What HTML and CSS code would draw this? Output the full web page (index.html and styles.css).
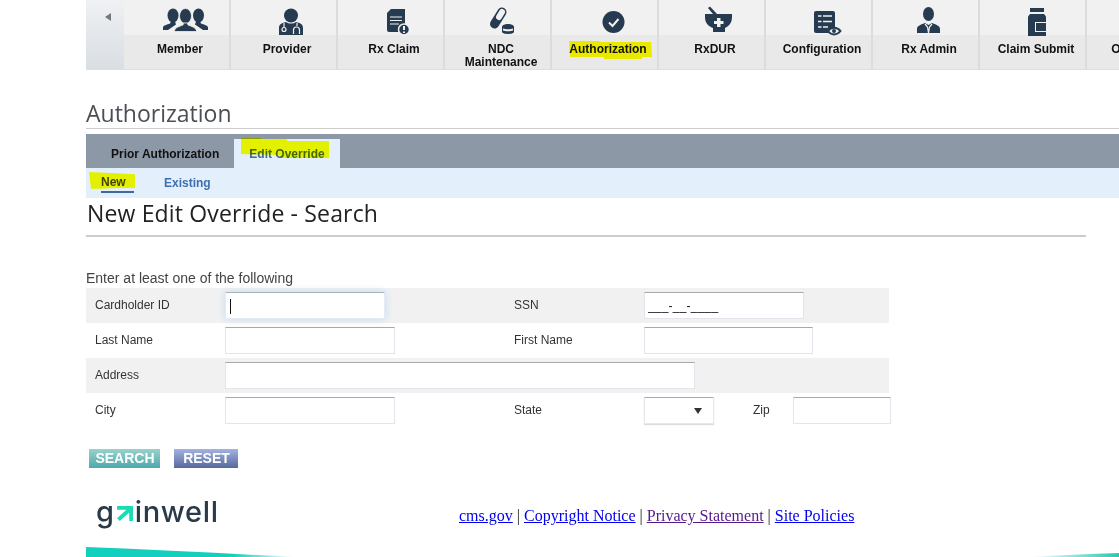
FILE: index.html
```html
<!DOCTYPE html>
<html lang="en">
<head>
<meta charset="utf-8">
<title>Authorization</title>
<link rel="stylesheet" href="styles.css">
</head>
<body>
<div class="page">
  <nav class="nav">
    <div class="nav-back"><span class="tri"></span></div>
    <a class="nav-item"><span class="nav-icon"><svg viewBox="0 0 60 36" width="60" height="36"><g class="ic"><ellipse cx="23" cy="15.500" rx="5.500" ry="7"/><path d="M13 30v-2.500c0-2 4-3 7-4l1-2h4l1 3-8 5.500z"/><ellipse cx="48.500" cy="15.500" rx="5.500" ry="7"/><path d="M58 30v-2.500c0-2-4-3-7-4l-1-2h-4l-1 3 8 5.500z"/><ellipse class="ring2" cx="35.500" cy="16" rx="6" ry="7.500"/><path class="ring2" d="M24 31.500c1-4 5-5 9-6.500l.5-2h4l.5 2c4 1.500 8 2.500 9 6.500z"/></g></svg></span><span class="nav-label">Member</span></a>
    <a class="nav-item"><span class="nav-icon"><svg viewBox="0 0 60 36" width="60" height="36"><g class="ic"><circle cx="34" cy="15.500" r="7"/><path d="M22 35v-7c0-4 3-5 7-6 3 2 7 2 10 0 4 1 7 2 7 6v7z"/></g><circle class="ln" cx="27" cy="29.500" r="2"/><path class="ln" d="M27 23v4.500M40 23v3M36.500 34v-4a3 3 0 0 1 6 0v4"/></svg></span><span class="nav-label">Provider</span></a>
    <a class="nav-item"><span class="nav-icon"><svg viewBox="0 0 60 36" width="60" height="36"><path class="ic" d="M27 9h14v23H25a2 2 0 0 1-2-2V13z"/><path class="ln" d="M26 17h12M26 20.500h12M26 24h9"/><circle class="ic ring" cx="40" cy="29.500" r="5.500"/><path class="ln wide" d="M40 26v4M40 31.500v1.500"/></svg></span><span class="nav-label">Rx Claim</span></a>
    <a class="nav-item"><span class="nav-icon"><svg viewBox="0 0 60 36" width="60" height="36"><path class="cap" d="M23.500 24L31 12"/><path class="cap-in" d="M28 17L31 12"/><path class="ic" d="M31 27c0-2 3-3 6-3s6 1 6 3v5c0 1-3 2-6 2s-6-1-6-2z"/><path class="cut" d="M32 28.500c2 1 8 1 10 0v2c-2 1-8 1-10 0z"/></svg></span><span class="nav-label">NDC<br>Maintenance</span></a>
    <a class="nav-item"><span class="nav-icon"><svg viewBox="0 0 60 36" width="60" height="36"><circle class="ic" cx="35.500" cy="22" r="11"/><path class="ln wide" d="M31 22.500l3.500 3.500 6-7"/></svg></span><span class="nav-label"><span class="hl-wrap">Authorization<svg class="hl hl-auth" viewBox="0 0 84 18" preserveAspectRatio="none"><path d="M1 1h30l2 1h50l1 14-10 0v2H36v-2H2z"/></svg></span></span></a>
    <a class="nav-item"><span class="nav-icon"><svg viewBox="0 0 60 36" width="60" height="36"><path class="ic" d="M20 14h27v3c0 6-3 9-7 11v4H28v-4c-5-2-8-5-8-11z"/><path class="ic" d="M23 8l2-1.500 7 7.500h-4z"/><path class="cut" d="M32 18h3.500v3h3v3h-3v3H32v-3h-3v-3h3z"/></svg></span><span class="nav-label">RxDUR</span></a>
    <a class="nav-item"><span class="nav-icon"><svg viewBox="0 0 60 36" width="60" height="36"><path class="ic" d="M24 11h17a2 2 0 0 1 2 2v20H24a2 2 0 0 1-2-2V13a2 2 0 0 1 2-2z"/><path class="ln bar" d="M26 16h3.500M31 16h9M26 21.500h3.500M31 21.500h9M26 27h3.500M31 27h5"/><path class="eye" d="M36 31c3-4.500 9-4.500 12.500 0-3.500 4.500-9.500 4.500-12.500 0z"/><circle class="ic" cx="42" cy="31" r="2"/></svg></span><span class="nav-label">Configuration</span></a>
    <a class="nav-item"><span class="nav-icon"><svg viewBox="0 0 60 36" width="60" height="36"><g class="ic"><ellipse cx="29.500" cy="14" rx="5.500" ry="7"/><path d="M18 33v-4c0-3 3-4 8-6l3.500 2 3.500-2c5 2 8 3 8 6v4z"/></g><path class="ln" d="M26 24l2.500 3 1 6M33 24l-2.500 3-1 6"/></svg></span><span class="nav-label">Rx Admin</span></a>
    <a class="nav-item"><span class="nav-icon"><svg viewBox="0 0 60 36" width="60" height="36"><path class="ic" d="M24 8h14v4H24z"/><path class="ic" d="M24 14h14l2 2.500V36H22V16.500z"/><path class="cut2" d="M29 22h11v10H29zM30 23v8h10v-8z" fill-rule="evenodd"/></svg></span><span class="nav-label">Claim Submit</span></a>
    <a class="nav-item"><span class="nav-icon"></span><span class="nav-label">Operations</span></a>
  </nav>

  <main class="content">
    <h1 class="page-title">Authorization</h1>
    <div class="tabs">
      <a class="tab">Prior Authorization</a>
      <a class="tab tab-active"><span class="hl-wrap">Edit Override<svg class="hl hl-edit" viewBox="0 0 88 20" preserveAspectRatio="none"><path d="M0 0h20v1h25l2 2h41v17H40l-1-3-39-1z"/></svg></span></a>
    </div>
    <div class="subtabs">
      <a class="subtab subtab-active"><span class="hl-wrap">New<svg class="hl hl-new" viewBox="0 0 46 16" preserveAspectRatio="none"><path d="M0 0l23 1 23 1v13H30l-28 1z"/></svg></span></a>
      <a class="subtab">Existing</a>
    </div>
    <h2 class="section-title">New Edit Override - Search</h2>
    <p class="hint">Enter at least one of the following</p>

    <form class="form">
      <div class="row row-alt">
        <label class="lbl">Cardholder ID</label>
        <span class="cell"><input class="inp inp-focus" type="text"><span class="caret"></span></span>
        <label class="lbl">SSN</label>
        <span class="cell"><input class="inp inp-short" type="text" value="___-__-____"></span>
      </div>
      <div class="row">
        <label class="lbl">Last Name</label>
        <span class="cell"><input class="inp" type="text"></span>
        <label class="lbl">First Name</label>
        <span class="cell"><input class="inp inp-first" type="text"></span>
      </div>
      <div class="row row-alt">
        <label class="lbl">Address</label>
        <span class="cell cell-wide"><input class="inp inp-wide" type="text"></span>
      </div>
      <div class="row">
        <label class="lbl">City</label>
        <span class="cell"><input class="inp" type="text"></span>
        <label class="lbl">State</label>
        <span class="cell cell-state">
          <span class="select-wrap"><select class="sel"><option></option></select></span>
          <label class="lbl-zip">Zip</label>
          <input class="inp inp-zip" type="text">
        </span>
      </div>
    </form>

    <div class="actions">
      <button class="btn btn-search" type="button">SEARCH</button>
      <button class="btn btn-reset" type="button">RESET</button>
    </div>

    <footer class="footer">
      <div class="logo"><span>g</span><svg class="logo-arrow" viewBox="0 0 17 16" width="16" height="15"><path d="M0 0h17v16h-4V7L3 16 0 13l10-9H0z"/></svg><span>inwell</span></div>
      <div class="links">
        <a class="link" href="#">cms.gov</a> | <a class="link" href="#">Copyright Notice</a> | <a class="link link-visited" href="#">Privacy Statement</a> | <a class="link" href="#">Site Policies</a>
      </div>
    </footer>
  </main>

  <div class="swoosh">
    <svg width="210" height="10" viewBox="0 0 210 10"><defs><linearGradient id="sl" x1="0" x2="1"><stop offset="0" stop-color="#13cfbd"/><stop offset=".7" stop-color="#13cfbd"/><stop offset="1" stop-color="#13cfbd" stop-opacity="0"/></linearGradient></defs><path fill="url(#sl)" d="M0 0c60 2 130 6 210 10H0z"/></svg>
    <svg width="90" height="4" viewBox="0 0 90 4"><defs><linearGradient id="sr" x1="0" x2="1"><stop offset="0" stop-color="#13cfbd" stop-opacity="0"/><stop offset="1" stop-color="#2bc5b4"/></linearGradient></defs><path fill="url(#sr)" d="M0 4c30-2 60-3 90-4v4z"/></svg>
  </div>
</div>
</body>
</html>
```
FILE: styles.css
```css
* { box-sizing: border-box; }
html, body { margin: 0; padding: 0; height: 557px; overflow: hidden; background: #fff; }
body { font-family: "Liberation Sans", Arial, sans-serif; font-size: 12px; color: #333; }
.page { width: 1119px; height: 557px; padding-left: 86px; display: flex; flex-direction: column; overflow: hidden; }

/* top nav */
.nav { display: flex; height: 70px; flex: none; border-bottom: 1px solid #dedede; width: 1033px; overflow: hidden; }
.nav-back { flex: none; width: 38px; height: 69px; background: linear-gradient(#eff1f3, #d9dee3); display: flex; justify-content: center; padding-top: 13px; }
.tri { width: 0; height: 0; border-style: solid; border-color: transparent #777 transparent transparent; border-width: 4px 6px 4px 0; margin-left: 6px; }
.nav-item { flex: none; width: 107px; height: 69px; border-right: 2px solid #dcdcdc; padding-left: 7px; display: flex; flex-direction: column; background: #e9e9e9; text-align: center; }
.nav-icon { height: 35px; margin-left: -7px; padding-left: 7px; background: #f1f1f1; display: flex; justify-content: center; }
.nav-label { font-weight: bold; font-size: 12px; line-height: 13px; color: #111; padding-top: 8px; }
.ic { fill: #263b50; }
.ring { stroke: #f1f1f1; stroke-width: 1.5; }
.ring2 { stroke: #f1f1f1; stroke-width: .8; }
.ln { stroke: #f1f1f1; stroke-width: 1.2; fill: none; }
.bar { stroke-width: 1.6; }
.wide { stroke-width: 2; }
.cut { fill: #f1f1f1; }
.cut2 { fill: #f1f1f1; }
.cap { stroke: #263b50; stroke-width: 9; stroke-linecap: round; fill: none; }
.cap-in { stroke: #f1f1f1; stroke-width: 6; stroke-linecap: round; fill: none; }
.eye { fill: #f1f1f1; stroke: #263b50; stroke-width: 2; }

/* highlighter */
.hl-wrap { position: relative; display: inline-block; }
.hl { position: absolute; fill: #e9f500; mix-blend-mode: darken; pointer-events: none; }
.hl-auth { left: -1px; top: -3px; width: 84px; height: 19px; }
.hl-edit { left: -8px; top: -9px; width: 88px; height: 20px; }
.hl-new { left: -12px; top: -3px; width: 46px; height: 17px; }

/* headings */
.content { flex: 1; min-height: 0; }
.page-title { margin: 0; height: 59px; padding-top: 27px; font: 400 23px/32px "Open Sans", sans-serif; color: #4a4f55; border-bottom: 1px solid #ccc; }
.tabs { margin-top: 5px; height: 34px; background: #8c98a6; display: flex; padding-left: 25px; align-items: flex-end; }
.tab { height: 29px; padding-top: 8px; font-weight: bold; font-size: 12px; line-height: 14px; color: #111; }
.tab:first-child { width: 123px; }
.tab-active { width: 106px; background: #e3f0fb; color: #44689a; text-align: center; }
.subtabs { height: 30px; background: #e3f0fb; display: flex; padding-left: 15px; gap: 30px; }
.subtab { font-weight: bold; font-size: 12px; line-height: 14px; color: #3f6fb0; padding-top: 8px; height: 24px; }
.subtab-active { color: #445; border-bottom: 2px solid #3d6aa5; width: 33px; padding-top: 7px; height: 25px; }
.section-title { margin: 0; height: 39px; padding-left: 1px; font: 400 23px/30px "Open Sans", sans-serif; color: #222; border-bottom: 2px solid #ccc; width: 1000px; letter-spacing: .16px; }
.hint { margin: 0; padding-top: 32px; font-size: 14px; line-height: 18px; height: 51px; color: #444; }

/* form */
.form { width: 803px; }
.row { display: grid; grid-template-columns: 139px 280px 139px 1fr; height: 35px; align-items: center; }
.row-alt { background: #f1f1f1; }
.lbl { padding: 0 0 2px 9px; font-size: 12px; color: #333; }
.cell { position: relative; display: flex; align-items: center; }
.cell-wide { grid-column: 2 / span 3; }
.inp { display: block; height: 27px; width: 170px; padding: 0 3px; background: #fff; border: 1px solid #e2e5ec; border-top: 1px solid #a8a8a8; font: 12px "Liberation Sans", sans-serif; color: #111; outline: none; border-radius: 0; }
.inp-focus { width: 160px; box-shadow: 0 0 8px #c2daef; border-color: #e4edf5; border-top-color: #a9b4bc; }
.inp-short { width: 160px; letter-spacing: .2px; }
.inp-first { width: 169px; }
.inp-wide { width: 470px; }
.caret { position: absolute; left: 5px; top: 7px; width: 1px; height: 15px; background: #111; }
.cell-state { width: 300px; overflow: visible; }
.select-wrap { position: relative; display: block; width: 70px; height: 27px; }
.select-wrap::after { content: ""; position: absolute; left: 50px; top: 11px; border-style: solid; border-color: #333 transparent transparent; border-width: 6px 4px 0; }
.sel { appearance: none; display: block; width: 70px; height: 27px; background: #fff; border: 1px solid #e6e8ee; border-top: 1px solid #a8a8a8; box-shadow: 0 1px 1px #ddd; border-radius: 0; }
.lbl-zip { margin-left: 39px; padding-bottom: 2px; width: 40px; font-size: 12px; color: #333; }
.inp-zip { width: 98px; flex: none; }

/* actions */
.actions { display: flex; gap: 14px; padding: 21px 0 0 3px; height: 41px; }
.btn { height: 19px; border: 0; padding: 0 0 0 1px; font: bold 14px/19px "Liberation Sans", sans-serif; color: #fff; border-radius: 0; }
.btn-search { width: 71px; background: linear-gradient(#98d2cc, #4fa8aa); }
.btn-reset { width: 64px; background: linear-gradient(#a3b3e2, #56689d); }

/* footer */
.footer { display: flex; height: 79px; }
.logo { width: 373px; padding: 25px 0 0 10px; display: flex; align-items: flex-start; font: 500 29px/36px Inter, sans-serif; letter-spacing: .7px; color: #2b3a48; height: 70px; }
.logo-arrow { fill: #19dcb4; flex: none; margin: 12px 2px 0 2px; }
.links { padding-top: 38px; font: 16px/18px "Liberation Serif", serif; color: #222; }
.link { color: #0000ee; }
.link-visited { color: #551a8b; }

/* bottom swoosh */
.swoosh { flex: none; height: 10px; display: flex; justify-content: space-between; align-items: flex-end; }
.swoosh svg { display: block; }
```
